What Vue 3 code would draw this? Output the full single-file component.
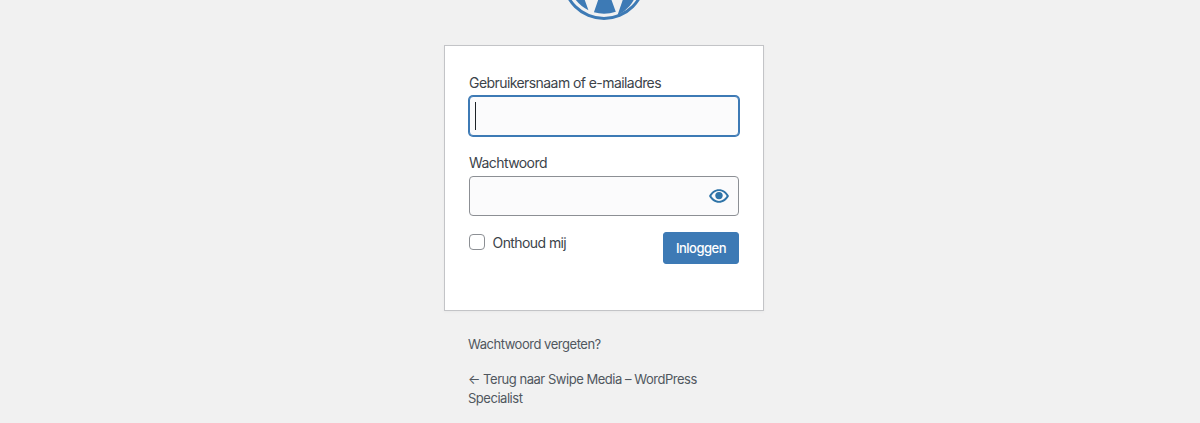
<template>
  <div class="login-page">
    <div class="login">
      <a class="logo" href="#" aria-label="WordPress">
        <svg viewBox="0 0 20 20" width="84" height="84">
          <path fill="#3d7ab5" fill-rule="evenodd" d="M10 0a10 10 0 1 0 0 20 10 10 0 0 0 0-20zm0 .7a9.300 9.300 0 1 1 0 18.600A9.300 9.300 0 0 1 10 .7z" />
          <path fill="#3d7ab5" d="M1.500 10a8.500 8.500 0 0 0 4.800 7.660L2.240 6.540A8.470 8.470 0 0 0 1.500 10zM10.150 10.740l-2.550 7.420a8.500 8.500 0 0 0 5.220-.14l-.06-.12zM16.590 6.390c.1.800.15 1.660-.04 2.620-.1.600-.35 1.400-.8 2.500l-2.560 7.400A8.500 8.500 0 0 0 16.590 6.390zM15.050 9.700c0-1.050-.38-1.780-.7-2.350-.43-.7-.84-1.300-.84-2 0-.78.6-1.520 1.430-1.520h.11A8.500 8.500 0 0 0 2.900 5.350h.55c.89 0 2.260-.11 2.260-.11.46-.3.510.65.05.7l-.95.09 2.980 8.870 1.800-5.380-1.280-3.500-.86-.08c-.46-.03-.4-.73.05-.7 0 0 1.360.11 2.170.11.890 0 2.260-.11 2.260-.11.46-.3.510.65.05.7l-.95.08 2.960 8.800.82-2.730c.35-1.130.62-1.940.62-2.640z" />
        </svg>
      </a>
      <form class="login-form" @submit.prevent>
        <div class="field">
          <label for="user">Gebruikersnaam of e-mailadres</label>
          <div class="input focused" id="user"><span class="caret"></span></div>
        </div>
        <div class="field">
          <label for="pass">Wachtwoord</label>
          <div class="input" id="pass">
            <svg class="eye" viewBox="0 0 20 20" width="20" height="20">
              <path fill="#2f74a8" fill-rule="evenodd" d="M10 3.200c4.200 0 7.800 2.600 10 6.800-2.200 4.200-5.800 6.800-10 6.800S2.200 14.200 0 10C2.200 5.800 5.800 3.200 10 3.200zM10 5.100c-3 0-5.800 1.800-7.700 4.900 1.900 3.100 4.700 4.900 7.700 4.900s5.800-1.800 7.700-4.900C15.800 6.900 13 5.100 10 5.100z" />
              <circle fill="#2f74a8" cx="10" cy="9.600" r="3.700" />
            </svg>
          </div>
        </div>
        <div class="actions">
          <label class="remember">
            <span class="checkbox"></span>
            <span class="remember-text">Onthoud mij</span>
          </label>
          <button type="submit" class="submit">Inloggen</button>
        </div>
      </form>
      <p class="nav"><a href="#">Wachtwoord vergeten?</a></p>
      <p class="nav back"><a href="#">← Terug naar Swipe Media – WordPress Specialist</a></p>
    </div>
  </div>
</template>

<script setup>
</script>

<style>
html, body { margin: 0; background: #f1f1f1; }
</style>

<style scoped>
.login-page { height: 423px; overflow: hidden; background: #f1f1f1; padding-left: 8px; box-sizing: border-box; display: flex; justify-content: center; font-family: Inter, "Liberation Sans", sans-serif; color: #3c434a; }
.login { width: 320px; margin-top: -64px; }
.logo { display: block; width: 84px; height: 84px; margin: 0 auto 25px; }
.logo svg { display: block; }
.login-form { background: #fff; border: 1px solid #c3c4c7; box-shadow: 0 1px 3px rgba(0, 0, 0, 0.04); padding: 26px 24px 46px; height: 266px; box-sizing: border-box; }
.field { margin-bottom: 16px; }
.field label { display: block; font-size: 14px; line-height: 21px; letter-spacing: -0.57px; margin-bottom: 3px; }
.input { height: 40px; box-sizing: border-box; background: #fbfbfc; border: 1px solid #8c8f94; border-radius: 4px; display: flex; align-items: center; justify-content: flex-end; padding: 0 9px; position: relative; }
.input.focused { border-color: #3d7ab5; box-shadow: 0 0 0 1px #3d7ab5; justify-content: flex-start; padding: 0 5px; }
.caret { width: 1px; height: 28px; background: #1d2327; }
.actions { display: flex; justify-content: space-between; align-items: flex-start; }
.remember { display: flex; align-items: center; gap: 7.500px; font-size: 14px; line-height: 16px; letter-spacing: -0.58px; margin-top: 2px; }
.remember-text { position: relative; top: 1px; }
.checkbox { width: 16px; height: 16px; box-sizing: border-box; background: #fff; border: 1px solid #8c8f94; border-radius: 4px; }
.submit { width: 76px; height: 32px; padding: 0; background: #3d7ab5; border: 1px solid #3d7ab5; border-radius: 3px; color: #fff; font-family: inherit; font-size: 13px; font-weight: 500; letter-spacing: -0.5px; }
.nav { margin: 24px 0 0; padding: 0 24px; font-size: 13px; line-height: 19px; letter-spacing: -0.47px; }
.back { margin-top: 16px; }
.nav a { color: #50575e; text-decoration: none; }
</style>
